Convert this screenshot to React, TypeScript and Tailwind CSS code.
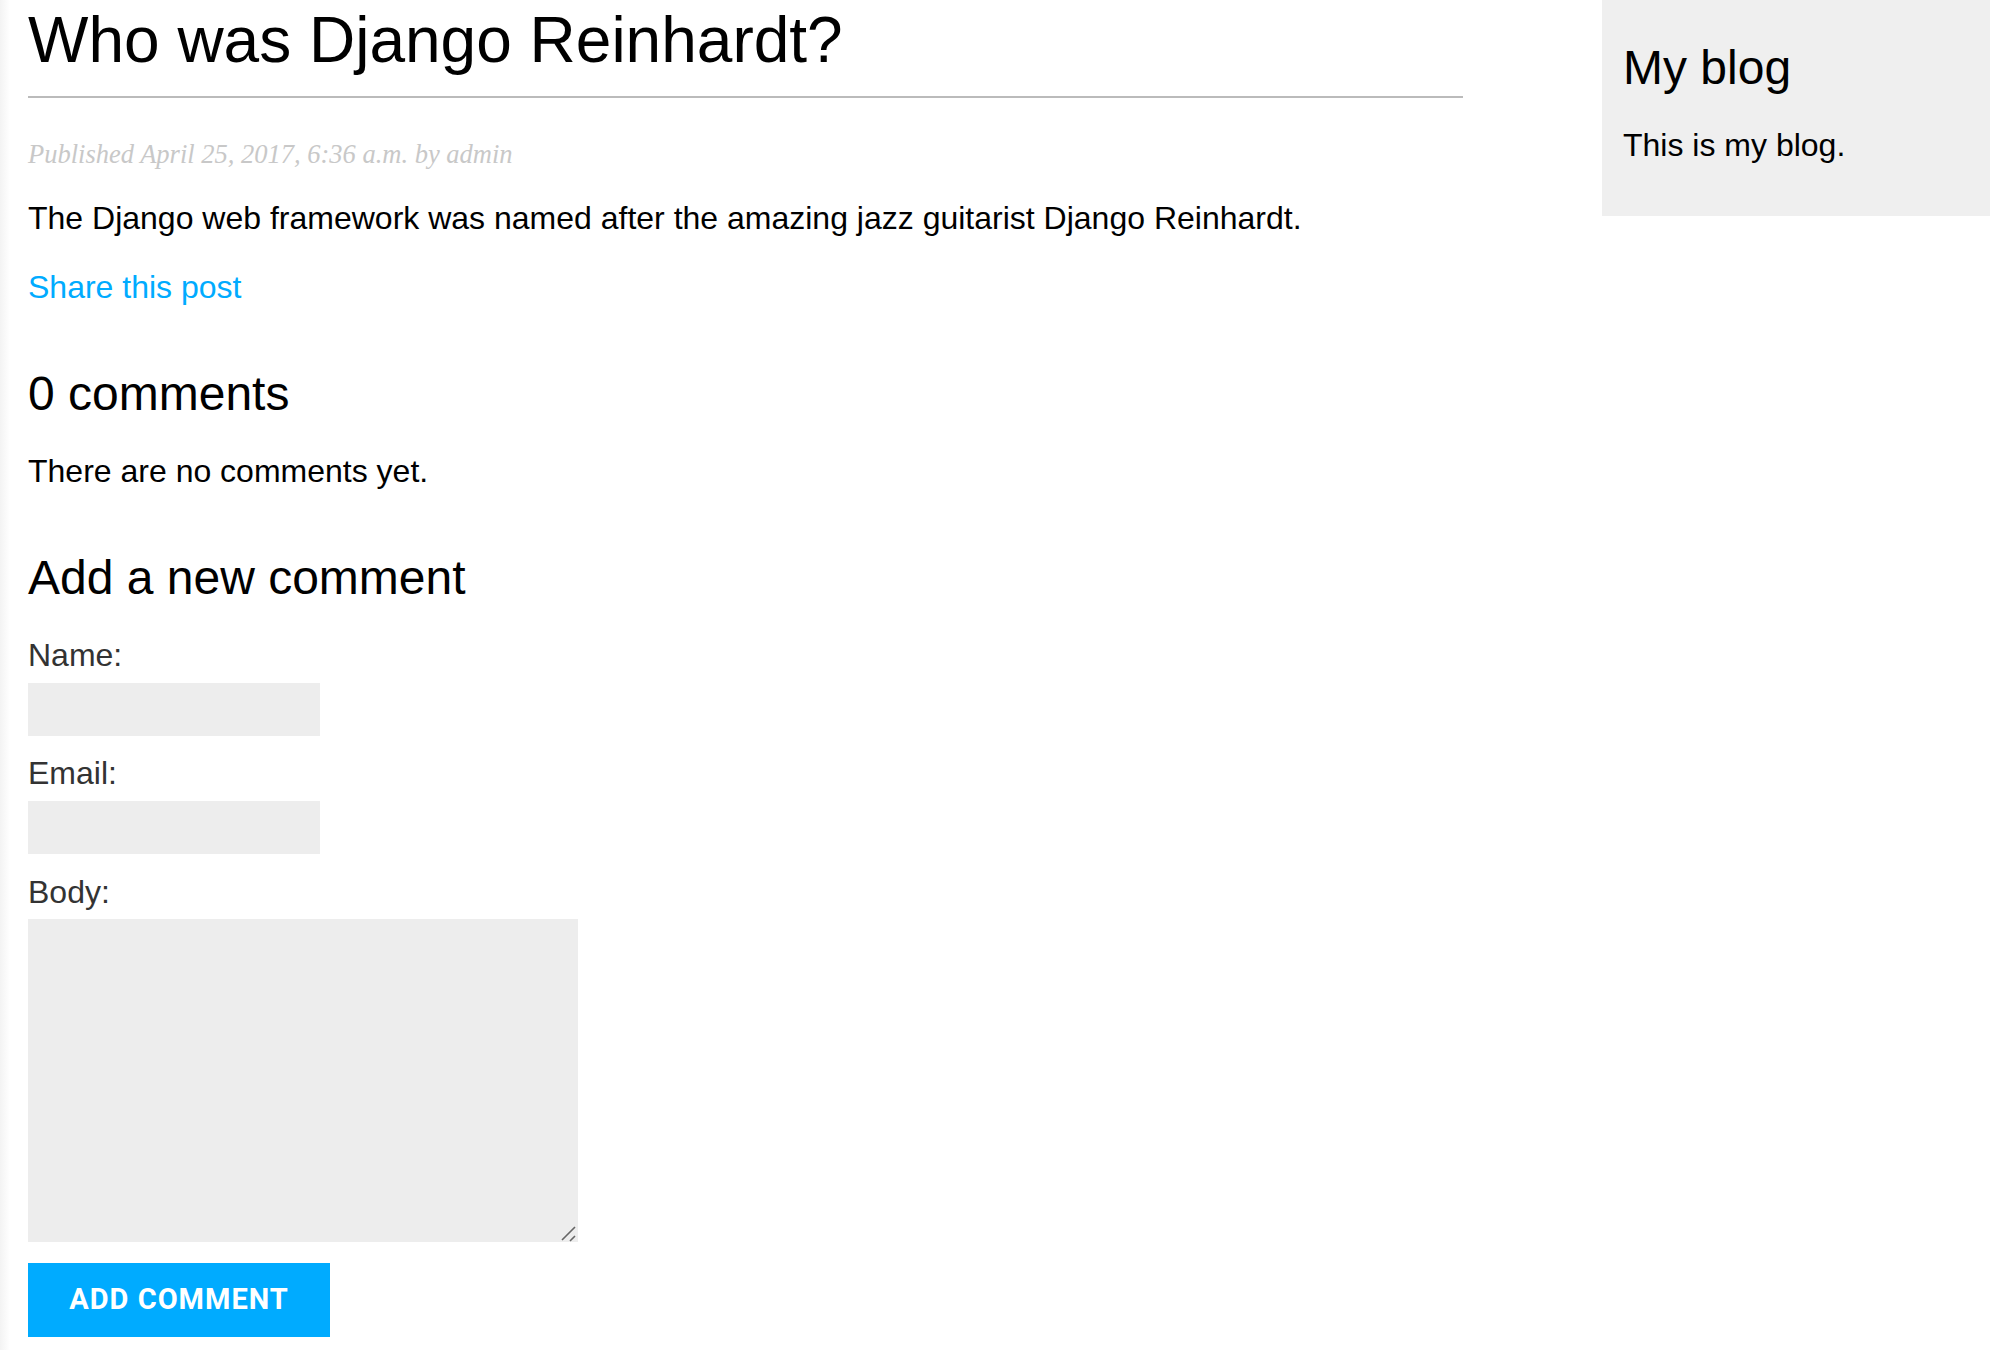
import React from "react";

const sans = "font-['Liberation_Sans',Arial,Helvetica,sans-serif]";

function Field({ label, top }: { label: string; top: string }) {
  return (
    <div className={top}>
      <label className="block text-[32px] leading-[37px] text-[#333]">{label}</label>
      <input type="text" className="block mt-[9px] w-[292px] h-[53px] bg-[#ededed] outline-none border-0" />
    </div>
  );
}

export default function App() {
  return (
    <div className={`flex min-h-[1350px] bg-white text-black ${sans}`}>
      {/* faint shade on the left edge */}
      <div className="w-[10px] shrink-0 bg-linear-to-r from-[#f3f3f3] to-white" />

      <main className="w-[1453px] shrink-0 pl-[18px]">
        <h1 className="mt-[4px] text-[64px] leading-[72px] font-normal pb-[20px] border-b-2 border-[#bbb]">
          Who was Django Reinhardt?
        </h1>
        <p className="mt-[42px] text-[26.5px] leading-[28px] italic text-[#c8c8c8] font-['Liberation_Serif',Georgia,serif]">
          Published April 25, 2017, 6:36 a.m. by admin
        </p>
        <p className="mt-[32px] text-[32px] leading-[37px]">
          The Django web framework was named after the amazing jazz guitarist Django Reinhardt.
        </p>
        <p className="mt-[32px] text-[32px] leading-[37px]">
          <a href="#" className="text-[#00abff]">Share this post</a>
        </p>

        <h2 className="mt-[60px] text-[48px] leading-[55px] font-normal">0 comments</h2>
        <p className="mt-[32px] text-[32px] leading-[37px]">There are no comments yet.</p>

        <h2 className="mt-[60px] text-[48px] leading-[55px] font-normal">Add a new comment</h2>
        <form onSubmit={(e) => e.preventDefault()}>
          <Field label="Name:" top="mt-[32px]" />
          <Field label="Email:" top="mt-[19px]" />
          <div className="mt-[20px]">
            <label className="block text-[32px] leading-[37px] text-[#333]">Body:</label>
            <div className="relative mt-[8px] w-[550px] h-[323px]">
              <textarea className="block w-full h-full bg-[#ededed] resize-none outline-none border-0" />
              <svg className="absolute right-0 bottom-0" width="20" height="20" viewBox="0 0 20 20">
                <path d="M4 18 L17 5 M12 19 L17 14" stroke="#666" strokeWidth="1.6" fill="none" />
              </svg>
            </div>
          </div>
          <button
            type="submit"
            className="mt-[21px] w-[302px] h-[74px] bg-[#00abff] text-white uppercase font-bold text-[29px] tracking-[1px] font-['Roboto',Arial,sans-serif]"
          >
            Add comment
          </button>
        </form>
      </main>

      <div className="flex-1" />

      <aside className="w-[388px] h-[216px] shrink-0 bg-[#efefef] px-[21px] pt-[40px]">
        <h2 className="text-[48px] leading-[55px] font-normal">My blog</h2>
        <p className="mt-[32px] text-[32px] leading-[37px]">This is my blog.</p>
      </aside>
    </div>
  );
}
